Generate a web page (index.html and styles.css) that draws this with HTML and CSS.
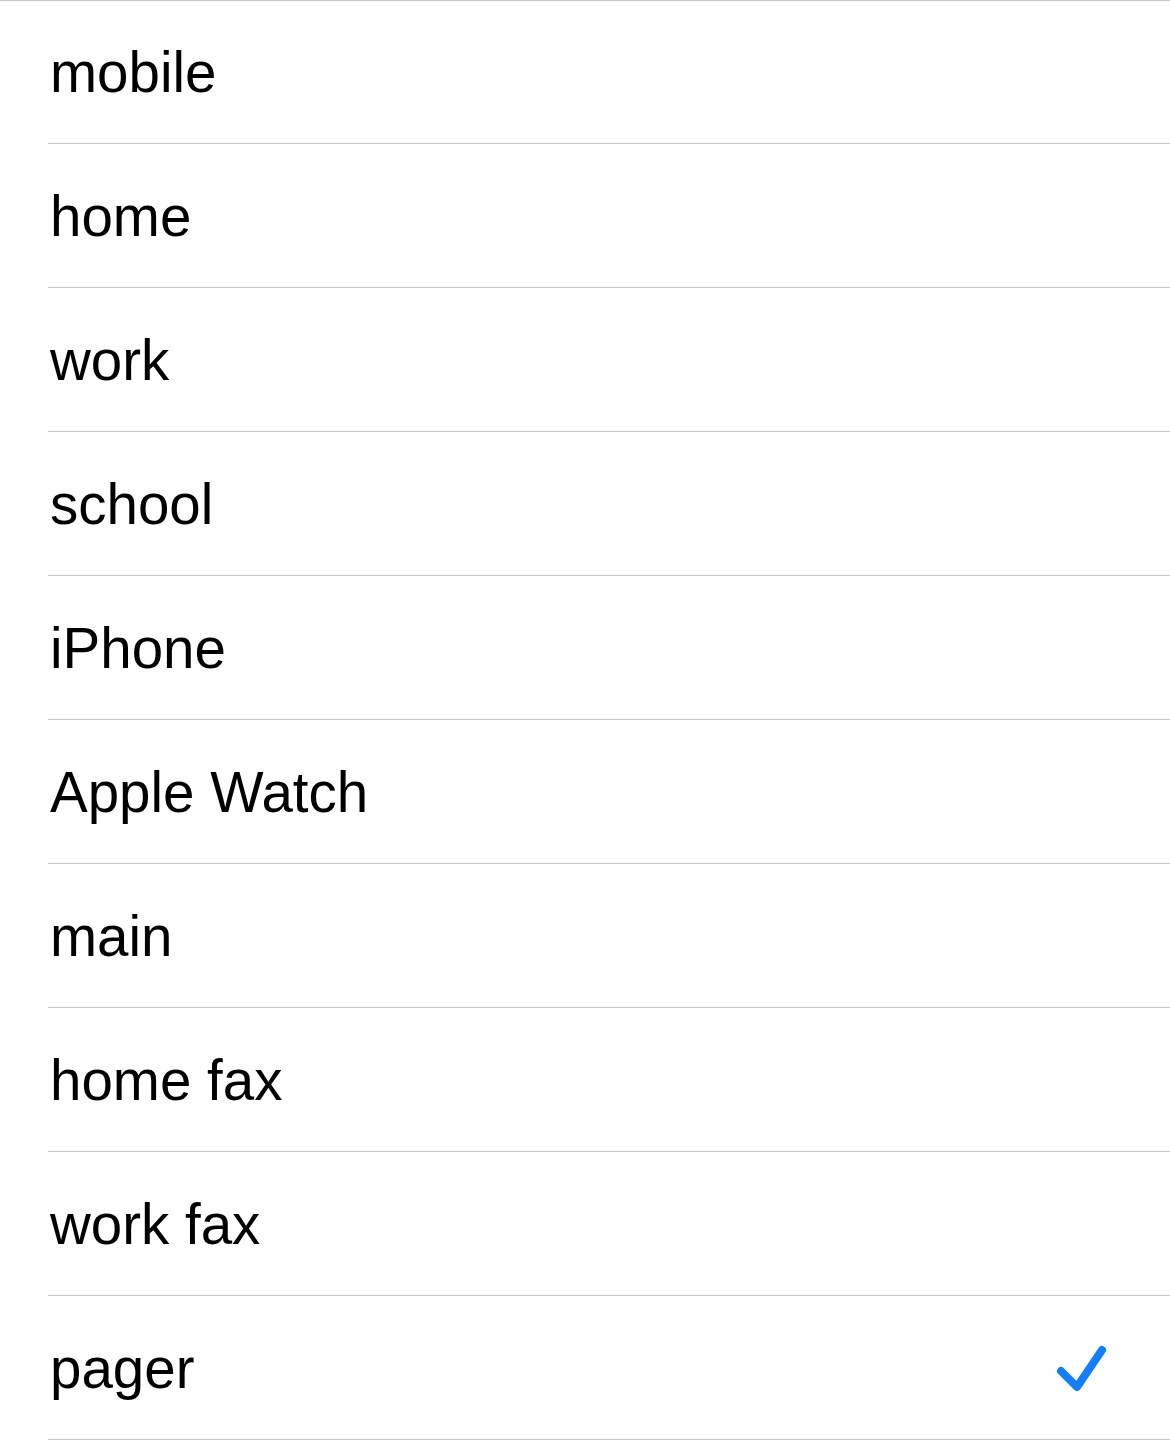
FILE: index.html
```html
<!DOCTYPE html>
<html lang="en">
<head>
    <meta charset="UTF-8">
    <meta name="viewport" content="width=device-width, initial-scale=1.0">
    <title>Label</title>
    <link rel="stylesheet" href="styles.css">
</head>
<body>
    <ul class="label-list">
        <li class="label-row"><span class="label-name">mobile</span></li>
        <li class="label-row"><span class="label-name">home</span></li>
        <li class="label-row"><span class="label-name">work</span></li>
        <li class="label-row"><span class="label-name">school</span></li>
        <li class="label-row"><span class="label-name">iPhone</span></li>
        <li class="label-row"><span class="label-name">Apple Watch</span></li>
        <li class="label-row"><span class="label-name">main</span></li>
        <li class="label-row"><span class="label-name">home fax</span></li>
        <li class="label-row"><span class="label-name">work fax</span></li>
        <li class="label-row selected">
            <span class="label-name">pager</span>
            <svg class="check" width="56" height="56" viewBox="0 0 56 56">
                <path d="M7 30 L23 46 L48 9" fill="none" stroke="#147efb" stroke-width="8" stroke-linecap="round" stroke-linejoin="round"/>
            </svg>
        </li>
    </ul>
</body>
</html>
```

FILE: styles.css
```css
body {
    margin: 0;
    padding: 0;
    background-color: #ffffff;
    font-family: 'Liberation Sans', Arial, sans-serif;
    color: #000000;
}

.label-list {
    list-style: none;
    margin: 0;
    padding: 0;
    border-top: 1px solid #c8c7cc;
}

.label-row {
    display: flex;
    align-items: center;
    justify-content: space-between;
    box-sizing: border-box;
    height: 144px;
    margin-left: 48px;
    padding: 3px 0 0 2px;
    border-bottom: 1px solid #c8c7cc;
}

.label-row:first-child {
    height: 143px;
}

.label-name {
    font-size: 56.5px;
    line-height: 1.1;
}

.check {
    margin-right: 60px;
}
```
